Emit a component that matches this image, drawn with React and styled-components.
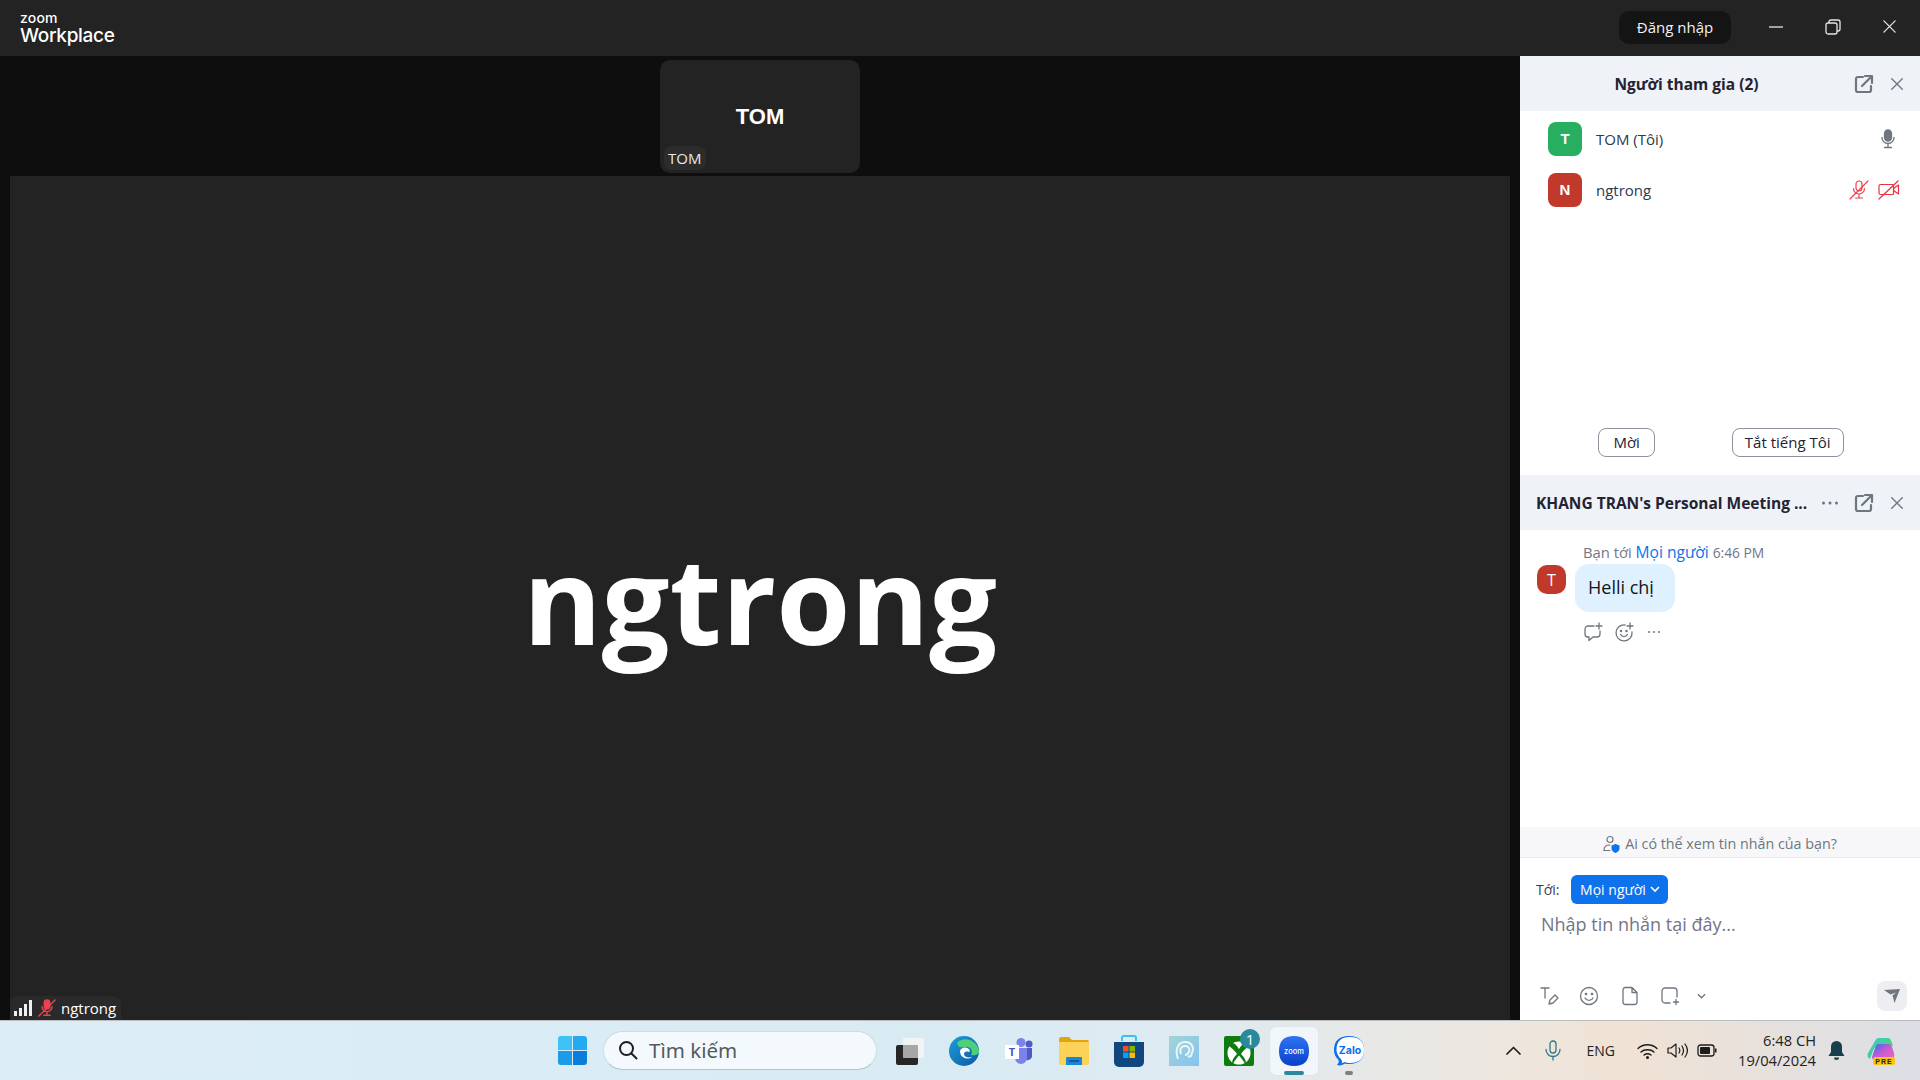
import React from "react";
import styled, { createGlobalStyle } from "styled-components";

const Global = createGlobalStyle`
  html, body { margin: 0; padding: 0; }
  body { font-family: "Open Sans", "Noto Sans", sans-serif; overflow: hidden; }
  * { box-sizing: border-box; }
`;

const Screen = styled.div`
  width: 1920px;
  height: 1080px;
  display: flex;
  flex-direction: column;
`;

const TitleBar = styled.header`
  height: 56px;
  flex: none;
  background: #232323;
  display: flex;
  align-items: center;
  padding: 0 2px 0 20px;
  color: #fff;
`;

const Logo = styled.div`
  display: flex;
  flex-direction: column;
  font-family: Inter, "Liberation Sans", sans-serif;
  margin-top: 4px;
`;

const LogoSmall = styled.span`
  font-size: 14px;
  line-height: 12px;
  font-weight: 500;
  letter-spacing: 0.2px;
`;

const LogoBig = styled.span`
  font-size: 19px;
  line-height: 24px;
  font-weight: 500;
  letter-spacing: -0.3px;
`;

const Spacer = styled.div`
  flex: 1;
`;

const SignIn = styled.button`
  width: 112px;
  height: 33px;
  border: 0;
  border-radius: 10px;
  background: #141414;
  color: #f2f2f2;
  font: 15px "Open Sans", sans-serif;
  padding: 0 0 2px;
  margin: -1px 16px 0 0;
`;

const WinButton = styled.div`
  width: 57px;
  height: 56px;
  display: flex;
  align-items: center;
  justify-content: center;
  margin-top: -3px;
`;

const Body = styled.div`
  flex: 1;
  min-height: 0;
  display: flex;
`;

const Stage = styled.main`
  width: 1520px;
  background: #0e0e0e;
  display: flex;
  flex-direction: column;
  align-items: center;
`;

const Strip = styled.div`
  height: 120px;
  flex: none;
  padding-top: 4px;
`;

const Thumb = styled.div`
  position: relative;
  width: 200px;
  height: 113px;
  border-radius: 10px;
  background: #232323;
  display: flex;
  align-items: center;
  justify-content: center;
  color: #fff;
  font: bold 22px "Liberation Sans", sans-serif;
`;

const ThumbLabel = styled.span`
  position: absolute;
  left: 4px;
  bottom: 3px;
  padding: 0 5px 0 4px;
  border-radius: 8px;
  background: #2c2c2c;
  color: #e8e8e8;
  font: 15px/24px "Open Sans", sans-serif;
`;

const MainVideo = styled.div`
  position: relative;
  width: 1500px;
  flex: 1;
  background: #232323;
  display: flex;
  align-items: center;
  justify-content: center;
  color: #fff;
  font: bold 120px "Open Sans", sans-serif;
`;

const NameTag = styled.div`
  position: absolute;
  left: 0;
  bottom: 0;
  height: 24px;
  display: flex;
  align-items: center;
  gap: 5px;
  padding: 0 5px 0 4px;
  border-radius: 8px 8px 0 0;
  background: #2a2a2a;
  color: #fff;
  font: 15px "Open Sans", sans-serif;
`;

const Side = styled.aside`
  width: 400px;
  background: #fff;
  display: flex;
  flex-direction: column;
  color: #232333;
`;

const PanelHead = styled.div`
  height: 55px;
  flex: none;
  background: #eff2f6;
  display: flex;
  align-items: center;
  padding: 0 16px;
`;

const PanelTitle = styled.div`
  flex: 1;
  font: 700 15.5px "Open Sans", sans-serif;
  color: #232333;
  text-align: ${(p) => (p.$center ? "center" : "left")};
  padding-right: ${(p) => (p.$center ? "17px" : "0")};
  white-space: nowrap;
`;

const HeadIcons = styled.div`
  display: flex;
  align-items: center;
  gap: 16px;
`;

const People = styled.section`
  height: 364px;
  flex: none;
  display: flex;
  flex-direction: column;
  padding: 2px 0 0;
`;

const Person = styled.div`
  height: 51px;
  display: flex;
  align-items: center;
  padding: 0 20px 0 28px;
  font: 15px "Open Sans", sans-serif;
  color: #2d3a4d;
`;

const Avatar = styled.div`
  width: 34px;
  height: 34px;
  border-radius: 8px;
  background: ${(p) => p.$bg};
  color: #fff;
  display: flex;
  align-items: center;
  justify-content: center;
  font: bold 15px "Liberation Sans", sans-serif;
  margin-right: 14px;
`;

const PersonName = styled.div`
  flex: 1;
`;

const PersonIcons = styled.div`
  display: flex;
  align-items: center;
  gap: 9px;
  padding-right: ${(p) => p.$inset || 0}px;
`;

const PeopleActions = styled.div`
  margin-top: auto;
  height: 47px;
  display: flex;
  gap: 77px;
  justify-content: center;
  padding: 0 0 0 2px;
`;

const Outline = styled.button`
  height: 29px;
  padding: 0 ${(p) => p.$pad}px 2px;
  border: 1px solid #8f919c;
  border-radius: 8px;
  background: #fff;
  color: #232333;
  font: 15px "Open Sans", sans-serif;
`;

const ChatLog = styled.section`
  flex: 1;
  min-height: 0;
  padding: 12px 17px 0;
`;

const MsgMeta = styled.div`
  padding-left: 46px;
  margin-bottom: 1px;
  font: 14.8px/20px "Open Sans", sans-serif;
  color: #747487;
`;

const Blue = styled.span`
  color: #0e72ed;
  font-size: 15.6px;
`;

const MsgTime = styled.span`
  font-size: 13.8px;
`;

const MsgRow = styled.div`
  display: flex;
  align-items: flex-start;
  gap: 9px;
`;

const MsgAvatar = styled.div`
  width: 29px;
  height: 29px;
  margin-top: 1px;
  border-radius: 10px;
  background: #c0392b;
  color: #fff;
  display: flex;
  align-items: center;
  justify-content: center;
  font: 16px "Open Sans", sans-serif;
`;

const Bubble = styled.div`
  width: 100px;
  height: 48px;
  border-radius: 14px;
  background: #dff0ff;
  color: #131619;
  display: flex;
  align-items: center;
  padding: 0 0 2px 13px;
  font: 18px "Open Sans", sans-serif;
`;

const MsgTools = styled.div`
  display: flex;
  align-items: center;
  gap: 11px;
  padding: 10px 0 0 46px;
`;

const PrivacyNote = styled.div`
  height: 31px;
  flex: none;
  background: #f7f7fa;
  border-bottom: 1px solid #e9ebf0;
  display: flex;
  align-items: center;
  justify-content: center;
  gap: 4px;
  padding-top: 3px;
  font: 14.3px "Open Sans", sans-serif;
  color: #6e7680;
`;

const Composer = styled.section`
  height: 162px;
  flex: none;
  display: flex;
  flex-direction: column;
  padding: 17px 13px 9px 16px;
`;

const ToRow = styled.div`
  display: flex;
  align-items: center;
  gap: 12px;
  font: 14px "Open Sans", sans-serif;
  color: #39394d;
`;

const ToButton = styled.button`
  height: 29px;
  width: 97px;
  border: 0;
  border-radius: 6px;
  background: #0e72ed;
  color: #fff;
  font: 14px "Open Sans", sans-serif;
  display: flex;
  align-items: center;
  justify-content: center;
  gap: 4px;
  padding: 0;
`;

const Placeholder = styled.div`
  padding: 7px 0 0 5px;
  font: 18px/26px "Open Sans", sans-serif;
  color: #747487;
`;

const ComposerTools = styled.div`
  margin-top: auto;
  display: flex;
  align-items: center;
  gap: 20.4px;
  padding-left: 3px;
`;

const ToolChevron = styled.span`
  display: flex;
  margin-left: -4px;
`;

const SendButton = styled.div`
  width: 30px;
  height: 30px;
  margin-left: auto;
  border-radius: 8px;
  background: #eeeef2;
  display: flex;
  align-items: center;
  justify-content: center;
`;

const Taskbar = styled.footer`
  height: 60px;
  flex: none;
  display: flex;
  align-items: center;
  padding-left: 558px;
  border-top: 1px solid #b9bdc0;
  background: linear-gradient(90deg, #dcedf6 0%, #d8ebf3 50%, #dfeaf1 62%, #ede7df 78%, #f0e2d4 85%, #dcdfe6 100%);
`;

const Tray = styled.div`
  display: flex;
  align-items: center;
  color: #1c1c1c;
`;

const Apps = styled.div`
  display: flex;
  align-items: center;
`;

const StartIcon = styled.div`
  width: 29px;
  height: 29px;
  margin-right: 16px;
  display: grid;
  grid-template-columns: 1fr 1fr;
  gap: 1px;
`;

const Pane = styled.span`
  background: ${(p) => p.$bg};
  border-radius: ${(p) => p.$r};
`;

const Search = styled.div`
  width: 274px;
  height: 39px;
  border-radius: 20px;
  background: #f3f9fd;
  border: 1px solid #cfdbe3;
  border-bottom-color: #b4c2cc;
  display: flex;
  align-items: center;
  gap: 11px;
  padding: 0 0 2px 14px;
  font: 20.5px "Noto Sans", "Open Sans", sans-serif;
  color: #555a5e;
  margin-right: 4.5px;
`;

const AppSlot = styled.div`
  position: relative;
  width: 55px;
  height: 48px;
  display: flex;
  align-items: center;
  justify-content: center;

  ${(p) =>
    p.$active &&
    `
    &::before {
      content: "";
      position: absolute;
      top: 0;
      bottom: 0;
      left: 3.5px;
      right: 3.5px;
      border-radius: 5px;
      background: #f1f6fa;
      box-shadow: 0 0 1px #bcc8d0;
    }
    & > svg { position: relative; }
  `}
`;

const RunDot = styled.span`
  position: absolute;
  bottom: 0;
  left: 50%;
  transform: translateX(-50%);
  width: ${(p) => (p.$active ? 20 : 8)}px;
  height: 4px;
  border-radius: 2px;
  background: ${(p) => (p.$active ? "#2a8a9c" : "#7a7f84")};
`;

const Badge = styled.span`
  position: absolute;
  top: 2px;
  right: 6.5px;
  width: 20px;
  height: 20px;
  border-radius: 50%;
  background: #2a8a9c;
  color: #fff;
  display: flex;
  align-items: center;
  justify-content: center;
  font: 15px "Open Sans", sans-serif;
`;

const TrayText = styled.span`
  font: 14px "Open Sans", sans-serif;
  color: #222;
`;

const Clock = styled.div`
  text-align: right;
  padding-bottom: 2px;
  font: 14.7px/20px "Open Sans", sans-serif;
  color: #222;
`;

const TrayItem = styled.div`
  display: flex;
  align-items: center;
  justify-content: center;
  margin-left: ${(p) => p.$ml || 0}px;
`;

const stroke = { fill: "none", strokeLinecap: "round", strokeLinejoin: "round" };

const PopOut = () => (
  <svg width="20" height="20" viewBox="0 0 20 20" {...stroke} stroke="#6e7680" strokeWidth="2.2">
    <path d="M9 3H4a2 2 0 0 0-2 2v11a2 2 0 0 0 2 2h11a2 2 0 0 0 2-2v-4" />
    <path d="M8 12l9-9M11 2h7v7" />
  </svg>
);

const Cross = ({ size = 16, color = "#6e7680", width = 1.6 }) => (
  <svg width={size} height={size} viewBox="0 0 16 16" {...stroke} stroke={color} strokeWidth={width}>
    <path d="M2 2l12 12M14 2L2 14" />
  </svg>
);

const Dots = ({ small }) => (
  <svg width="18" height="6" viewBox="0 0 18 6" fill="#6e7680">
    {small ? (
      <>
        <circle cx="4" cy="3" r="1" />
        <circle cx="9" cy="3" r="1" />
        <circle cx="14" cy="3" r="1" />
      </>
    ) : (
      <>
        <circle cx="3.5" cy="3" r="1.5" />
        <circle cx="10" cy="3" r="1.5" />
        <circle cx="16.5" cy="3" r="1.5" />
      </>
    )}
  </svg>
);

const Mic = () => (
  <svg width="14" height="20" viewBox="0 0 14 20" {...stroke} stroke="#6e7680" strokeWidth="1.3">
    <rect x="3.5" y="1" width="7" height="11" rx="3.5" fill="#6e7680" />
    <path d="M1 8.5a6 6 0 0 0 12 0M7 15v3M3.5 18.5h7" />
  </svg>
);

const MutedMic = ({ size = 20, filled }) => (
  <svg width={size} height={size} viewBox="0 0 20 20" {...stroke} stroke="#e8434e" strokeWidth={filled ? 1.6 : 1.2}>
    <rect x="7" y="1" width="6" height="10" rx="3" fill={filled ? "#e8434e" : "none"} />
    <path d="M4.5 8.5a5.5 5.5 0 0 0 11 0M10 14v3.5M6.5 18h7M1 19L19 1" />
  </svg>
);

const MutedCam = () => (
  <svg width="22" height="20" viewBox="0 0 22 20" {...stroke} stroke="#e8343f" strokeWidth="1.2">
    <path d="M2.5 4.5h12a1 1 0 0 1 1 1v8a1 1 0 0 1-1 1h-12a1.5 1.5 0 0 1-1.5-1.5v-7a1.5 1.5 0 0 1 1.5-1.5z" />
    <path d="M15.5 8.5l5-3.5v9l-5-3.5M1 19L20 1" />
  </svg>
);

const Signal = () => (
  <svg width="19" height="17" viewBox="0 0 19 17" fill="#f0f0f0">
    <rect x="0" y="11" width="3" height="5" />
    <rect x="5" y="8" width="3" height="8" />
    <rect x="10" y="4" width="3" height="12" />
    <rect x="15" y="0" width="3" height="16" />
  </svg>
);

const ToolIcon = ({ children }) => (
  <svg width="20" height="20" viewBox="0 0 20 20" {...stroke} stroke="#6e7680" strokeWidth="1.3">
    {children}
  </svg>
);

const ZoomTile = () => (
  <svg width="30" height="30" viewBox="0 0 30 30">
    <defs>
      <linearGradient id="zt" x1="0" y1="0" x2="0" y2="1">
        <stop offset="0" stopColor="#2f74f5" />
        <stop offset="1" stopColor="#0b3fc9" />
      </linearGradient>
    </defs>
    <path d="M15 0c10 0 15 5 15 15s-5 15-15 15S0 25 0 15 5 0 15 0z" fill="url(#zt)" />
    <text x="15" y="17.5" textAnchor="middle" fontSize="7.5" fill="#fff" fontFamily="Inter, sans-serif" fontWeight="500">zoom</text>
  </svg>
);

const ZaloTile = () => (
  <svg width="30" height="30" viewBox="0 0 30 30">
    <path d="M15 0c10 0 15 5 15 14s-5 14-15 14c-2 0-3 0-4-.5C9 29 6 30 3 29c2-2 2-4 1.5-5C1.5 21 0 18 0 14 0 5 5 0 15 0z" fill="#0a6cf0" />
    <path d="M16 1c9 0 14 4 14 13s-5 13-14 13c-2 0-4-.3-5.5-1-1 .7-2 1-3 1.3 1-1.5.5-2.8-.5-4C4 20 2.5 17 2.5 14 2.5 5 7 1 16 1z" fill="#fff" />
    <text x="16" y="17.5" textAnchor="middle" fontSize="10.5" fontWeight="700" fill="#0a6cf0" fontFamily="Inter, sans-serif">Zalo</text>
  </svg>
);

const App = () => (
  <Screen>
    <Global />
    <TitleBar>
      <Logo>
        <LogoSmall>zoom</LogoSmall>
        <LogoBig>Workplace</LogoBig>
      </Logo>
      <Spacer />
      <SignIn>Đăng nhập</SignIn>
      <WinButton>
        <svg width="14" height="14" viewBox="0 0 14 14" stroke="#e6e6e6" strokeWidth="1.3"><path d="M0 7h14" /></svg>
      </WinButton>
      <WinButton>
        <svg width="16" height="16" viewBox="0 0 16 16" fill="none" stroke="#e6e6e6" strokeWidth="1.3">
          <rect x="1" y="4" width="11" height="11" rx="2" />
          <path d="M4 4V3a2 2 0 0 1 2-2h7a2 2 0 0 1 2 2v7a2 2 0 0 1-2 2h-1" />
        </svg>
      </WinButton>
      <WinButton>
        <Cross size={15} color="#e6e6e6" width={1.4} />
      </WinButton>
    </TitleBar>
    <Body>
      <Stage>
        <Strip>
          <Thumb>
            TOM
            <ThumbLabel>TOM</ThumbLabel>
          </Thumb>
        </Strip>
        <MainVideo>
          ngtrong
          <NameTag>
            <Signal />
            <MutedMic size={18} filled />
            ngtrong
          </NameTag>
        </MainVideo>
      </Stage>
      <Side>
        <PanelHead>
          <PanelTitle $center>Người tham gia (2)</PanelTitle>
          <HeadIcons>
            <PopOut />
            <Cross size={14} />
          </HeadIcons>
        </PanelHead>
        <People>
          <Person>
            <Avatar $bg="#27ae60">T</Avatar>
            <PersonName>TOM (Tôi)</PersonName>
            <PersonIcons $inset={5}><Mic /></PersonIcons>
          </Person>
          <Person>
            <Avatar $bg="#c0392b">N</Avatar>
            <PersonName>ngtrong</PersonName>
            <PersonIcons><MutedMic /><MutedCam /></PersonIcons>
          </Person>
          <PeopleActions>
            <Outline $pad={14}>Mời</Outline>
            <Outline $pad={12}>Tắt tiếng Tôi</Outline>
          </PeopleActions>
        </People>
        <PanelHead>
          <PanelTitle>KHANG TRAN's Personal Meeting ...</PanelTitle>
          <HeadIcons>
            <Dots />
            <PopOut />
            <Cross size={14} />
          </HeadIcons>
        </PanelHead>
        <ChatLog>
          <MsgMeta>Bạn tới <Blue>Mọi người</Blue> <MsgTime>6:46 PM</MsgTime></MsgMeta>
          <MsgRow>
            <MsgAvatar>T</MsgAvatar>
            <Bubble>Helli chị</Bubble>
          </MsgRow>
          <MsgTools>
            <ToolIcon>
              <path d="M11 4H5a3 3 0 0 0-3 3v5a3 3 0 0 0 3 3h1v3.5L10 15h4a3 3 0 0 0 3-3V9M16 1v6M13 4h6" />
            </ToolIcon>
            <ToolIcon>
              <path d="M11 3a8 8 0 1 0 7 7M6.5 12.5a4 4 0 0 0 7 0M16 1v6M13 4h6" />
              <circle cx="7" cy="9" r=".6" />
              <circle cx="12.5" cy="9" r=".6" />
            </ToolIcon>
            <Dots small />
          </MsgTools>
        </ChatLog>
        <PrivacyNote>
          <svg width="18" height="18" viewBox="0 0 18 18" fill="none">
            <circle cx="7" cy="4.5" r="3" stroke="#6e7680" strokeWidth="1.2" />
            <path d="M1 15c0-3 2-5 6-5" stroke="#6e7680" strokeWidth="1.2" strokeLinecap="round" />
            <path d="M1 15.5h6" stroke="#6e7680" strokeWidth="1.2" strokeLinecap="round" />
            <path d="M12.5 9l4 1.5v3c0 2-2 3.5-4 4.500-2-1-4-2.500-4-4.500v-3z" fill="#0e72ed" />
          </svg>
          Ai có thể xem tin nhắn của bạn?
        </PrivacyNote>
        <Composer>
          <ToRow>
            Tới:
            <ToButton>
              Mọi người
              <svg width="10" height="7" viewBox="0 0 10 7" fill="none" stroke="#fff" strokeWidth="1.6"><path d="M1 1l4 4 4-4" /></svg>
            </ToButton>
          </ToRow>
          <Placeholder>Nhập tin nhắn tại đây...</Placeholder>
          <ComposerTools>
            <ToolIcon>
              <path d="M2 2h8M6 2v10M10 18l1-4 5-5 3 3-5 5z" />
            </ToolIcon>
            <ToolIcon>
              <circle cx="10" cy="10" r="8.5" />
              <path d="M6 12a4.5 4.5 0 0 0 8 0" />
              <circle cx="7" cy="8" r=".7" />
              <circle cx="13" cy="8" r=".7" />
            </ToolIcon>
            <ToolIcon>
              <path d="M5 1.5h7l5 5V16a2.5 2.5 0 0 1-2.5 2.5h-9A2.5 2.5 0 0 1 3 16V4a2.5 2.5 0 0 1 2-2.500zM12 1.500V6.500h5" />
            </ToolIcon>
            <ToolIcon>
              <path d="M10 17H5a3 3 0 0 1-3-3V5a3 3 0 0 1 3-3h9a3 3 0 0 1 3 3v6M16 13.5v5M13.5 16h5" />
            </ToolIcon>
            <ToolChevron>
              <svg width="9" height="7" viewBox="0 0 10 7" fill="none" stroke="#6e7680" strokeWidth="1.5"><path d="M1 1l4 4 4-4" /></svg>
            </ToolChevron>
            <SendButton>
              <svg width="16" height="14" viewBox="0 0 16 14" fill="#6e7680"><path d="M0 1l16-1-5.500 14-2-7.500L12 3.500 6.500 5.500z" /></svg>
            </SendButton>
          </ComposerTools>
        </Composer>
      </Side>
    </Body>
    <Taskbar>
      <Apps>
        <StartIcon>
          <Pane $bg="#3cc2f5" $r="3px 0 0 0" />
          <Pane $bg="#26aaef" $r="0 3px 0 0" />
          <Pane $bg="#1c9be8" $r="0 0 0 3px" />
          <Pane $bg="#0b7edb" $r="0 0 3px 0" />
        </StartIcon>
        <Search>
          <svg width="20" height="20" viewBox="0 0 20 20" {...stroke} stroke="#1e1e1e" strokeWidth="2">
            <circle cx="8.5" cy="8.5" r="6.5" />
            <path d="M13.5 13.5l5 5" />
          </svg>
          Tìm kiếm
        </Search>
        <AppSlot>
          <svg width="30" height="30" viewBox="0 0 30 30">
            <rect x="2" y="9" width="22" height="20" rx="2" fill="#262626" />
            <rect x="9" y="2" width="22" height="20" rx="1" fill="#f4f4f4" opacity=".88" />
            <rect x="9" y="9" width="15" height="13" fill="#9a9a9a" opacity=".8" />
          </svg>
        </AppSlot>
        <AppSlot>
          <svg width="30" height="30" viewBox="0 0 30 30">
            <defs>
              <linearGradient id="edge" x1="0" y1="0" x2="1" y2="1">
                <stop offset="0" stopColor="#1b9fd8" />
                <stop offset="1" stopColor="#0c59a4" />
              </linearGradient>
            </defs>
            <circle cx="15" cy="15" r="15" fill="url(#edge)" />
            <path d="M8 7C14 0 28 3 30 15c0 4-5 5-8 4 3-4-1-9-6-8-4 0-6 2-8-4z" fill="#4ed07a" />
            <path d="M11 15c1-4 8-5 10 0l-1 1c-3-1-5 0-5 2 0 3 4 4 8 3-3 3-12 2-12-6z" fill="#fff" />
          </svg>
        </AppSlot>
        <AppSlot>
          <svg width="28" height="26" viewBox="0 0 28 26">
            <circle cx="16" cy="4.5" r="4.5" fill="#7b83eb" />
            <circle cx="24" cy="6" r="3.5" fill="#5059c9" />
            <path d="M19 10h8v9a5 5 0 0 1-8 2z" fill="#5059c9" />
            <path d="M9 10h13v10a6 6 0 0 1-12 0z" fill="#7b83eb" />
            <rect x="0" y="7" width="14" height="14" fill="#fff" />
            <text x="7" y="18" textAnchor="middle" fontSize="11" fontWeight="700" fill="#4b53bc" fontFamily="Open Sans, sans-serif">T</text>
          </svg>
        </AppSlot>
        <AppSlot>
          <svg width="30" height="28" viewBox="0 0 30 28">
            <path d="M0 2a2 2 0 0 1 2-2h8l3 3h15a2 2 0 0 1 2 2v5H0z" fill="#e3a40e" />
            <path d="M0 5h30v21a2 2 0 0 1-2 2H2a2 2 0 0 1-2-2z" fill="#fcd258" />
            <path d="M8 20h14a1 1 0 0 1 1 1v7H7v-7a1 1 0 0 1 1-1z" fill="#1a86d6" />
            <path d="M10 24h10" stroke="#0b4f8c" strokeWidth="1.5" />
          </svg>
        </AppSlot>
        <AppSlot>
          <svg width="30" height="32" viewBox="0 0 30 32">
            <path d="M8 6V3a2 2 0 0 1 2-2h10a2 2 0 0 1 2 2v3" fill="none" stroke="#35c3f2" strokeWidth="2" />
            <path d="M0 7h30v20a5 5 0 0 1-5 5H5a5 5 0 0 1-5-5z" fill="#12467e" />
            <rect x="9" y="11" width="5.5" height="5.5" fill="#f25022" />
            <rect x="15.5" y="11" width="5.5" height="5.5" fill="#7fba00" />
            <rect x="9" y="17.5" width="5.5" height="5.5" fill="#00a4ef" />
            <rect x="15.5" y="17.5" width="5.5" height="5.5" fill="#ffb900" />
          </svg>
        </AppSlot>
        <AppSlot>
          <svg width="30" height="30" viewBox="0 0 30 30">
            <defs>
              <linearGradient id="copil" x1="0" y1="0" x2="1" y2="1">
                <stop offset="0" stopColor="#9fd6d6" />
                <stop offset="1" stopColor="#86c2f2" />
              </linearGradient>
            </defs>
            <rect width="30" height="30" fill="url(#copil)" />
            <path d="M9 23c-3-8-1-17 7-17s9 7 7 11l-1 3-3 1M12 18c-2-4 0-8 4-8s5 3 4 6c-1 2-2 3-4 3" fill="none" stroke="#eaf6f8" strokeWidth="2" />
          </svg>
        </AppSlot>
        <AppSlot>
          <svg width="30" height="30" viewBox="0 0 30 30">
            <rect width="30" height="30" rx="2" fill="#107c10" />
            <circle cx="15" cy="17" r="11.5" fill="#fff" />
            <path d="M8 7c3 0 5 3 7 6 2-3 4-6 7-6l3 3c-3 2-6 5-8 8 3 3 5 6 5 9l-1 .5c-2-3-4-6-6-8-2 2-4 5-6 8l-1-.5c0-3 2-6 5-9-2-3-5-6-8-8z" fill="#107c10" />
          </svg>
          <Badge>1</Badge>
        </AppSlot>
        <AppSlot $active>
          <ZoomTile />
          <RunDot $active />
        </AppSlot>
        <AppSlot>
          <ZaloTile />
          <RunDot />
        </AppSlot>
      </Apps>
      <Tray>
        <TrayItem $ml={129}>
          <svg width="15" height="9" viewBox="0 0 15 9" {...stroke} stroke="#1c1c1c" strokeWidth="1.7"><path d="M1 8l6.5-6.5L14 8" /></svg>
        </TrayItem>
        <TrayItem $ml={24}>
          <svg width="16" height="21" viewBox="0 0 16 21" {...stroke} stroke="#2d7a8e" strokeWidth="1.3">
            <rect x="5" y="1" width="6" height="12" rx="3" />
            <path d="M1 9.5a7 7 0 0 0 14 0M8 16.5V20" />
          </svg>
        </TrayItem>
        <TrayItem $ml={26}><TrayText>ENG</TrayText></TrayItem>
        <TrayItem $ml={22}>
          <svg width="21" height="16" viewBox="0 0 21 16" {...stroke} stroke="#1c1c1c" strokeWidth="1.4">
            <path d="M1 5.5c5-5 14-5 19 0M4 9c3-3 10-3 13 0M7 12c2-1.5 5-1.5 7 0" />
            <circle cx="10.5" cy="14.5" r=".8" fill="#1c1c1c" />
          </svg>
        </TrayItem>
        <TrayItem $ml={9}>
          <svg width="21" height="17" viewBox="0 0 21 17" {...stroke} stroke="#1c1c1c" strokeWidth="1.2">
            <path d="M1 6v5h3l5 4V2L4 6zM12 6c1 1.5 1 3.5 0 5M15 4c2 3 2 6 0 9M18 2c3 4 3 9 0 13" />
          </svg>
        </TrayItem>
        <TrayItem $ml={9}>
          <svg width="20" height="13" viewBox="0 0 20 13" fill="none">
            <rect x="1" y="1" width="16" height="11" rx="2.5" stroke="#1c1c1c" strokeWidth="1.3" />
            <rect x="3" y="3" width="10" height="7" rx="1" fill="#1c1c1c" />
            <path d="M18 4.5h1.5v4H18z" fill="#1c1c1c" />
          </svg>
        </TrayItem>
        <TrayItem $ml={21}>
          <Clock>6:48 CH<br />19/04/2024</Clock>
        </TrayItem>
        <TrayItem $ml={12}>
          <svg width="17" height="20" viewBox="0 0 17 20" fill="#173f4c">
            <path d="M8.5 0a5.5 5.5 0 0 1 5.5 5.5V11l2.5 4H.5L3 11V5.5A5.5 5.5 0 0 1 8.5 0z" />
            <path d="M6 16.5h5a2.5 2.5 0 0 1-5 0z" />
          </svg>
        </TrayItem>
        <TrayItem $ml={22}>
          <svg width="28" height="28" viewBox="0 0 28 28">
            <defs>
              <linearGradient id="cpa" x1="0" y1="0" x2="1" y2="1">
                <stop offset="0" stopColor="#35c8e8" />
                <stop offset=".6" stopColor="#4fd07a" />
                <stop offset="1" stopColor="#f0b030" />
              </linearGradient>
              <linearGradient id="cpb" x1="0" y1="0" x2="1" y2="1">
                <stop offset="0" stopColor="#2a6fe8" />
                <stop offset=".5" stopColor="#c85ad8" />
                <stop offset="1" stopColor="#f06fa0" />
              </linearGradient>
            </defs>
            <path d="M8 4c1-2 2-3 4-3h9c2 0 3 2 4 5l1 3H11c-3 0-4 2-5 5l-3 8H4c-3 0-4-3-3-6z" fill="url(#cpa)" />
            <path d="M12 7h9c2 0 3 1 4 3l2 6c1 4-1 7-4 7H8c-2 0-3-1-3-3l3-9c1-3 2-4 4-4z" fill="url(#cpb)" />
            <rect x="6" y="20" width="22" height="8" rx="2" fill="#f9c514" />
            <text x="17" y="26.5" textAnchor="middle" fontSize="7" fontWeight="700" fill="#222" fontFamily="Liberation Sans, sans-serif" letterSpacing="1">PRE</text>
          </svg>
        </TrayItem>
      </Tray>
    </Taskbar>
  </Screen>
);

export default App;
